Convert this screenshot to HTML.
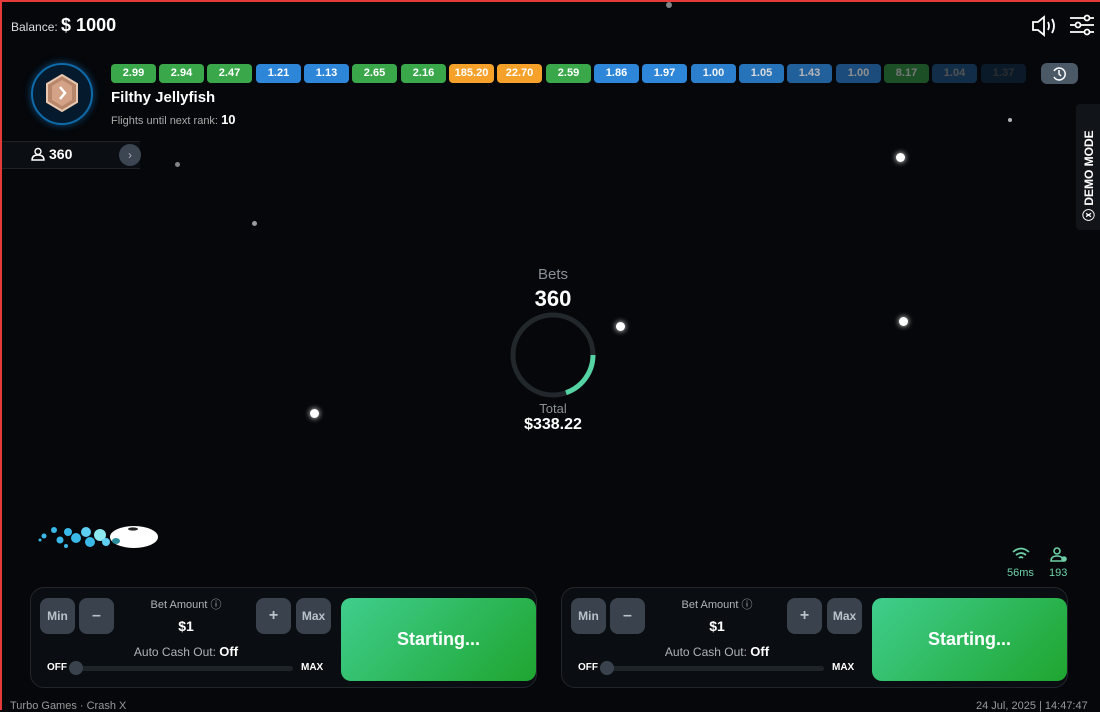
<!DOCTYPE html>
<html><head><meta charset="utf-8"><style>
*{box-sizing:border-box;margin:0;padding:0}
body{width:1100px;height:710px;background:#05070a;font-family:"Liberation Sans",sans-serif;color:#fff;position:relative;overflow:hidden}
.a{position:absolute}
.chip{position:absolute;top:64px;width:45px;height:19px;border-radius:4px;font-size:11px;font-weight:bold;text-align:center;line-height:19px}
.g{background:#3aa84a}.b{background:#2e86d8}.o{background:#f5a12a}
.star{position:absolute;border-radius:50%;background:#fff}
.panel{position:absolute;top:587px;width:507px;height:101px;border:1px solid #22262b;border-radius:14px;background:#0a0d11}
.btn{position:absolute;top:10px;width:35px;height:36px;border-radius:8px;background:#3a434d;color:#b9c1c9;font-size:12px;text-align:center;line-height:36px;font-weight:bold}
.go{position:absolute;left:310px;top:10px;width:195px;height:83px;border-radius:10px;background:linear-gradient(135deg,#3fce8d,#1fa52f);font-size:18px;font-weight:bold;text-align:center;line-height:83px}
.lbl{position:absolute;width:180px;text-align:center;left:65px;font-size:11px;color:#aeb4ba}
</style></head><body>
<div class="a" style="left:0;top:0;width:1100px;height:2px;background:#e53a3a"></div>
<div class="a" style="left:0;top:0;width:2px;height:710px;background:#e53a3a"></div>
<div class="a" style="left:11px;top:15px;font-size:12px;color:#ddd">Balance: <b style="font-size:18px;color:#fff">$ 1000</b></div>
<svg class="a" style="left:1031px;top:14px" width="28" height="24" viewBox="0 0 28 24" fill="none" stroke="#fff" stroke-width="1.8"><path d="M2 8h5l6-5v18l-6-5H2z"/><path d="M17 8q2 4 0 8M21 5q4 7 0 14"/></svg>
<svg class="a" style="left:1069px;top:14px" width="26" height="22" viewBox="0 0 26 22" stroke="#fff" stroke-width="1.8" fill="#05070a"><path d="M1 4h24M1 11h24M1 18h24"/><circle cx="18" cy="4" r="2.5"/><circle cx="9" cy="11" r="2.5"/><circle cx="18" cy="18" r="2.5"/></svg>
<div class="a" style="left:31px;top:63px;width:62px;height:62px;border-radius:50%;background:#061a2e;border:2px solid #0f6aa8;box-shadow:0 0 8px #0e4d80"></div>
<svg class="a" style="left:46px;top:74px" width="32" height="38" viewBox="0 0 32 38"><polygon points="16,1 31,10 31,28 16,37 1,28 1,10" fill="#b8866a" stroke="#e8c8b0" stroke-width="2"/><polygon points="16,6 26,12 26,26 16,32 6,26 6,12" fill="#d4a286"/><path d="M14 13l5 6-5 6" stroke="#fff" stroke-width="2.5" fill="none"/></svg>
<div class="a" style="left:111px;top:89px;font-size:15px;font-weight:bold">Filthy Jellyfish</div>
<div class="a" style="left:111px;top:112px;font-size:11px;color:#aaa">Flights until next rank: <b style="color:#fff;font-size:13px">10</b></div>
<div class="a" style="left:2px;top:141px;width:138px;height:28px;border-top:1px solid #222;border-bottom:1px solid #222;background:#0b0e12"></div>
<svg class="a" style="left:31px;top:147px" width="14" height="14" viewBox="0 0 14 14" fill="none" stroke="#fff" stroke-width="1.4"><circle cx="7" cy="4.5" r="3"/><path d="M1 13q0-5 6-5t6 5z"/></svg>
<div class="a" style="left:49px;top:146px;font-size:14px;font-weight:bold">360</div>
<div class="a" style="left:119px;top:144px;width:22px;height:22px;border-radius:50%;background:#3b4652;color:#aab;font-size:12px;text-align:center;line-height:22px">›</div>
<div class="chip g" style="left:111px">2.99</div><div class="chip g" style="left:159px">2.94</div><div class="chip g" style="left:207px">2.47</div><div class="chip b" style="left:256px">1.21</div><div class="chip b" style="left:304px">1.13</div><div class="chip g" style="left:352px">2.65</div><div class="chip g" style="left:401px">2.16</div><div class="chip o" style="left:449px">185.20</div><div class="chip o" style="left:497px">22.70</div><div class="chip g" style="left:546px">2.59</div><div class="chip b" style="left:594px">1.86</div><div class="chip b" style="left:642px">1.97</div><div class="chip b" style="left:691px;opacity:.95">1.00</div><div class="chip b" style="left:739px;opacity:.85">1.05</div><div class="chip b" style="left:787px;opacity:.7">1.43</div><div class="chip b" style="left:836px;opacity:.55">1.00</div><div class="chip g" style="left:884px;opacity:.45">8.17</div><div class="chip b" style="left:932px;opacity:.3">1.04</div><div class="chip b" style="left:981px;opacity:.15">1.37</div>
<div class="a" style="left:1041px;top:63px;width:37px;height:21px;border-radius:6px;background:#4b5967"></div>
<svg class="a" style="left:1051px;top:66px" width="16" height="16" viewBox="0 0 16 16" fill="none" stroke="#fff" stroke-width="1.5"><path d="M3 5a6 6 0 1 1 0 6"/><path d="M8 4v4l2 2"/></svg>
<div class="a" style="left:1076px;top:104px;width:24px;height:126px;background:#11151a;border-radius:4px 0 0 4px"></div>
<div class="a" style="left:1080px;top:221px;transform:rotate(-90deg);transform-origin:0 0;font-size:12px;font-weight:bold;white-space:nowrap;width:110px">ⓧ DEMO MODE</div>
<div class="star" style="left:896px;top:153px;width:9px;height:9px;box-shadow:0 0 6px #fff"></div>
<div class="star" style="left:899px;top:317px;width:9px;height:9px;box-shadow:0 0 6px #fff"></div>
<div class="star" style="left:616px;top:322px;width:9px;height:9px;box-shadow:0 0 6px #fff"></div>
<div class="star" style="left:310px;top:409px;width:9px;height:9px;box-shadow:0 0 6px #fff"></div>
<div class="star" style="left:252px;top:221px;width:5px;height:5px;opacity:.6"></div>
<div class="star" style="left:1008px;top:118px;width:4px;height:4px;opacity:.7"></div>
<div class="star" style="left:175px;top:162px;width:5px;height:5px;opacity:.5"></div>
<div class="star" style="left:666px;top:2px;width:6px;height:6px;opacity:.5"></div>
<div class="a" style="left:500px;top:266px;width:106px;text-align:center;font-size:15px;color:#8a9097">Bets</div>
<div class="a" style="left:500px;top:286px;width:106px;text-align:center;font-size:22px;font-weight:bold">360</div>
<svg class="a" style="left:510px;top:312px" width="86" height="86" viewBox="0 0 86 86" fill="none" stroke-width="5"><circle cx="43" cy="43" r="40" stroke="#22272c"/><path d="M83 43A40 40 0 0 1 56 80.7" stroke="#55d3a4"/></svg>
<div class="a" style="left:500px;top:401px;width:106px;text-align:center;font-size:13px;color:#8a9097">Total</div>
<div class="a" style="left:500px;top:416px;width:106px;text-align:center;font-size:16px;font-weight:bold">$338.22</div>
<svg class="a" style="left:34px;top:520px" width="126" height="32" viewBox="0 0 126 32"><circle cx="10" cy="16" r="2.5" fill="#3ab8e8"/><circle cx="6" cy="20" r="1.5" fill="#3ab8e8"/><circle cx="20" cy="10" r="3" fill="#3ab8e8"/><circle cx="26" cy="20" r="3.5" fill="#3ab8e8"/><circle cx="32" cy="26" r="2" fill="#3ab8e8"/><circle cx="34" cy="12" r="4" fill="#3ab8e8"/><circle cx="42" cy="18" r="5" fill="#3ab8e8"/><circle cx="52" cy="12" r="5" fill="#5ecff0"/><circle cx="56" cy="22" r="5" fill="#3ab8e8"/><circle cx="66" cy="15" r="6" fill="#8ee8f0"/><circle cx="72" cy="22" r="4" fill="#5ecff0"/><ellipse cx="100" cy="17" rx="24" ry="11" fill="#fff"/><ellipse cx="99" cy="9" rx="5" ry="1.6" fill="#222"/><ellipse cx="82" cy="21" rx="4" ry="3" fill="#2a8a9a"/></svg>
<svg class="a" style="left:1012px;top:547px" width="18" height="14" viewBox="0 0 18 14" fill="none" stroke="#6fd0a8" stroke-width="1.8"><path d="M1 5q8-7 16 0M4 8q5-4 10 0M7 11q2-2 4 0"/></svg>
<div class="a" style="left:1007px;top:567px;font-size:11px;color:#6fd0a8">56ms</div>
<svg class="a" style="left:1050px;top:547px" width="18" height="16" viewBox="0 0 18 16" fill="none" stroke="#6fd0a8" stroke-width="1.6"><circle cx="7" cy="4" r="3"/><path d="M1 14q0-5 6-5t6 5z"/><circle cx="14" cy="12" r="2" fill="#6fd0a8"/></svg>
<div class="a" style="left:1049px;top:567px;font-size:11px;color:#6fd0a8">193</div>
<div class="panel" style="left:30px">
<div class="btn" style="left:9px">Min</div><div class="btn" style="left:48px;font-size:16px">–</div>
<div class="lbl" style="top:8px">Bet Amount ⓘ</div>
<div class="lbl" style="top:30px;font-size:14px;font-weight:bold;color:#fff">$1</div>
<div class="lbl" style="top:56px;font-size:12px">Auto Cash Out: <b style="color:#fff;font-size:13px">Off</b></div>
<div class="btn" style="left:225px;font-size:16px">+</div><div class="btn" style="left:265px">Max</div>
<div class="a" style="left:16px;top:74px;font-size:10px;font-weight:bold">OFF</div>
<div class="a" style="left:40px;top:78px;width:222px;height:5px;border-radius:3px;background:#1f2429"></div>
<div class="a" style="left:38px;top:73px;width:14px;height:14px;border-radius:50%;background:#3a434d"></div>
<div class="a" style="left:270px;top:74px;font-size:10px;font-weight:bold">MAX</div>
<div class="go">Starting...</div></div>
<div class="panel" style="left:561px">
<div class="btn" style="left:9px">Min</div><div class="btn" style="left:48px;font-size:16px">–</div>
<div class="lbl" style="top:8px">Bet Amount ⓘ</div>
<div class="lbl" style="top:30px;font-size:14px;font-weight:bold;color:#fff">$1</div>
<div class="lbl" style="top:56px;font-size:12px">Auto Cash Out: <b style="color:#fff;font-size:13px">Off</b></div>
<div class="btn" style="left:225px;font-size:16px">+</div><div class="btn" style="left:265px">Max</div>
<div class="a" style="left:16px;top:74px;font-size:10px;font-weight:bold">OFF</div>
<div class="a" style="left:40px;top:78px;width:222px;height:5px;border-radius:3px;background:#1f2429"></div>
<div class="a" style="left:38px;top:73px;width:14px;height:14px;border-radius:50%;background:#3a434d"></div>
<div class="a" style="left:270px;top:74px;font-size:10px;font-weight:bold">MAX</div>
<div class="go">Starting...</div></div>
<div class="a" style="left:10px;top:700px;font-size:11px;color:#999">Turbo Games · Crash X</div>
<div class="a" style="left:976px;top:700px;font-size:11px;color:#999">24 Jul, 2025 | 14:47:47</div>
</body></html>
